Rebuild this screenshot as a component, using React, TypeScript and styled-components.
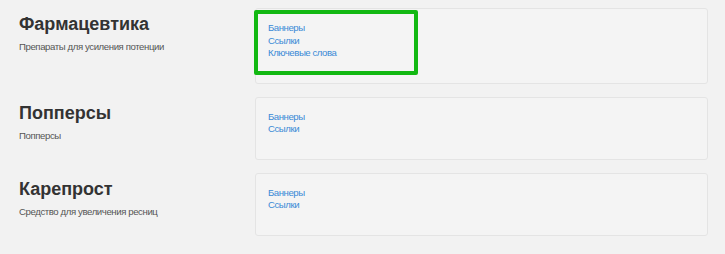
import React from 'react';
import styled, { createGlobalStyle } from 'styled-components';

const GlobalStyle = createGlobalStyle`
  html, body {
    margin: 0;
    padding: 0;
    background: #f2f2f2;
  }
  body {
    font-family: "Liberation Sans", Arial, sans-serif;
    color: #333;
  }
`;

const Page = styled.div`
  display: flex;
  flex-direction: column;
  gap: 13px;
  padding: 8px 17px 0 19px;
`;

const Row = styled.div`
  display: grid;
  grid-template-columns: 236px 1fr;
`;

const Info = styled.div`
  padding-top: 5px;
`;

const Title = styled.h3`
  margin: 0;
  font-size: 18px;
  line-height: 22px;
  font-weight: bold;
  color: #333;
`;

const Subtitle = styled.p`
  margin: 6px 0 0;
  font-size: 9.6px;
  letter-spacing: -0.4px;
  line-height: 12px;
  color: #555;
`;

const Panel = styled.div`
  position: relative;
  background: #f4f4f4;
  border: 1px solid #e4e4e4;
  border-radius: 3px;
  padding: 13px 12px 23px;
`;

const Links = styled.ul`
  list-style: none;
  margin: 0;
  padding: 0;
`;

const LinkItem = styled.li`
  font-size: 9.6px;
  letter-spacing: -0.45px;
  line-height: 12.5px;
`;

const Link = styled.a`
  color: #3a8ad6;
  text-decoration: none;
`;

const Highlight = styled.div`
  position: absolute;
  left: -2px;
  top: 1px;
  width: 164px;
  height: 65px;
  box-sizing: border-box;
  border: 4px solid #12b812;
  border-radius: 2px;
  pointer-events: none;
`;

type Section = {
  title: string;
  description: string;
  links: string[];
  highlighted?: boolean;
};

const sections: Section[] = [
  {
    title: 'Фармацевтика',
    description: 'Препараты для усиления потенции',
    links: ['Баннеры', 'Ссылки', 'Ключевые слова'],
    highlighted: true,
  },
  { title: 'Попперсы', description: 'Попперсы', links: ['Баннеры', 'Ссылки'] },
  {
    title: 'Карепрост',
    description: 'Средство для увеличения ресниц',
    links: ['Баннеры', 'Ссылки'],
  },
];

export default function App() {
  return (
    <>
      <GlobalStyle />
      <Page>
        {sections.map((s) => (
          <Row key={s.title}>
            <Info>
              <Title>{s.title}</Title>
              <Subtitle>{s.description}</Subtitle>
            </Info>
            <Panel>
              <Links>
                {s.links.map((l) => (
                  <LinkItem key={l}>
                    <Link href="#">{l}</Link>
                  </LinkItem>
                ))}
              </Links>
              {s.highlighted && <Highlight />}
            </Panel>
          </Row>
        ))}
      </Page>
    </>
  );
}
